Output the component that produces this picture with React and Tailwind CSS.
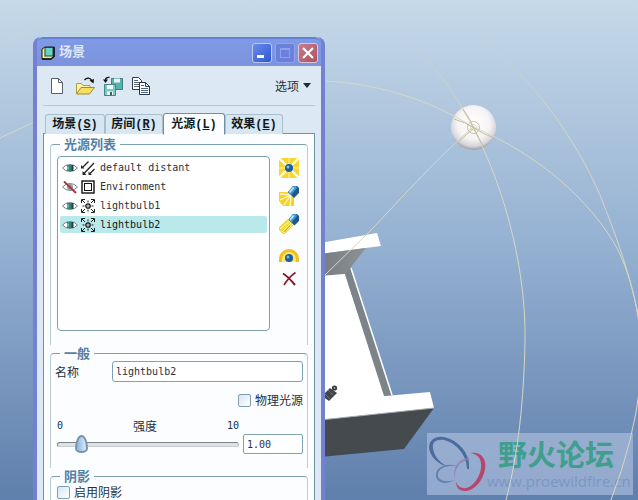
import React from 'react';

function Scene() {
  return (
    <svg
      className="pointer-events-none absolute inset-0 h-full w-full"
      viewBox="0 0 638 500"
      preserveAspectRatio="xMinYMin slice"
      aria-hidden="true"
    >
      <defs>
        <radialGradient id="bulb" cx="0.5" cy="0.4" r="0.6">
          <stop offset="0" stopColor="#ffffff" />
          <stop offset="0.6" stopColor="#f6f3f5" />
          <stop offset="0.85" stopColor="#d9d6dc" />
          <stop offset="1" stopColor="#9d9aa3" />
        </radialGradient>
        <linearGradient id="shade" x1="0" y1="0" x2="1" y2="0">
          <stop offset="0" stopColor="#777c80" />
          <stop offset="1" stopColor="#8d9297" />
        </linearGradient>
        <linearGradient id="fade" gradientUnits="userSpaceOnUse" x1="0" y1="40" x2="0" y2="110">
          <stop offset="0" stopColor="#d0d4be" stopOpacity="0.3" />
          <stop offset="1" stopColor="#d3d5c1" />
        </linearGradient>
      </defs>
      <polygon points="320,243 377,233 381,246 320,254" fill="#fff" />
      <polygon points="320,254 366,248 351,267 345,274 320,276" fill="url(#shade)" />
      <polygon points="320,276 345,274 385,396 430,392 434,408 320,420" fill="#fff" />
      <polygon points="345,274 350,267 392,395 384,396" fill="#7c8489" />
      <path d="M351 268 392 395" stroke="#fff" strokeWidth="1.5" />
      <polygon points="320,420 434,408 404,449 320,457" fill="#444a4e" />
      <path d="M320 420 434 408" stroke="#a9afb3" strokeWidth="1" />
      <path d="M322 396 330 388 337 393 329 401z" fill="#3f4549" />
      <circle cx="334.500" cy="388" r="2.600" fill="#333a3f" />
      <circle cx="334.500" cy="388" r="0.800" fill="#dfe3e6" />
      <path d="M325 394l5 5M328 390l5 5" stroke="#757b80" strokeWidth="0.800" />
      <circle cx="473.500" cy="127.500" r="22.500" fill="url(#bulb)" />
      <g fill="none" stroke="#d6d8c4" strokeWidth="1">
        <path d="M0 138 34 122" />
        <path d="M0 46Q30 28 62 11" opacity="0.3" />
        <path d="M325 81C380 84 430 100 473 127C540 155 592 202 618 250C630 275 636 300 640 330" />
        <path d="M412 43Q445 75 473 127" stroke="url(#fade)" />
        <path d="M473 127C508 195 526 275 525 340C524 400 518 455 506 500" />
        <path d="M485 42C535 82 575 138 600 195C618 240 632 280 640 325" stroke="url(#fade)" />
        <path d="M473 127C430 165 400 200 370 231L325 275" />
        <path d="M640 385Q634 440 611 500" />
      </g>
      <g fill="none" stroke="#c4bfa0" strokeWidth="1">
        <path d="M454 119Q465 122 474 128T494 138M463 109Q470 119 474 128T484 148M458 142 474 128" />
        <circle cx="473.500" cy="127.500" r="6" />
        <circle cx="473.500" cy="127.500" r="3" opacity="0.6" />
      </g>
    </svg>
  );
}

function Watermark() {
  return (
    <div className="absolute right-[5px] bottom-[5px] flex h-[62px] w-[206px] bg-[#b4c5e2]/60">
      <svg className="h-[62px] w-[60px] shrink-0" viewBox="0 0 60 62" aria-hidden="true">
        <path d="M22 34C12 32 3 24 2 15C2 7 8 3 16 4C30 6 44 20 42 36L40 36C40 22 29 10 17 7C9 6 5 9 6 15C7 24 14 31 22 34Z" fill="#4b6d9d" />
        <path d="M43 20C54 18 60 26 58 36C56 48 47 58 38 58C32 58 29 54 29 49C31 54 35 56 39 55C46 54 53 44 54 35C55 26 51 21 43 20Z" fill="#b5476d" />
        <path d="M42 27C34 27 27 35 28 45C25 35 32 25 42 25Z" fill="#8e7fa8" opacity="0.8" />
        <path d="M32 34C23 31 12 34 11 41C10 47 18 50 27 47C18 53 8 49 9 41C10 33 22 29 32 34Z" fill="#6182ad" />
      </svg>
      <div className="relative flex flex-col pt-1 whitespace-nowrap">
        <div className="px-[11px] font-['Noto_Sans_CJK_SC',sans-serif] text-[29px] leading-8 font-bold text-[#3f9f8c]">野火论坛</div>
        <div className="font-['Open_Sans',sans-serif] text-[15px] leading-6 text-[#7c97c0]">www.proewildfire.cn</div>
      </div>
    </div>
  );
}

function AppIcon() {
  return (
    <svg className="h-[14px] w-[14px]" viewBox="0 0 14 14" aria-hidden="true">
      <path d="M1 3 4 1h9v9l-3 3H1z" fill="#f3ec86" stroke="#1b1d20" />
      <rect x="4" y="1.500" width="8" height="8.500" fill="#66d3c8" stroke="#20464a" />
      <path d="M13 1v9.500L10 13H1" fill="none" stroke="#101214" strokeWidth="1.500" />
    </svg>
  );
}

function NewIcon() {
  return (
    <svg className="h-5 w-5" viewBox="0 0 20 20" aria-hidden="true">
      <path d="M4.500 2.500h7l4 4v11h-11z" fill="#fff" stroke="#5a5f66" />
      <path d="M11.500 2.500v4h4" fill="none" stroke="#5a5f66" />
    </svg>
  );
}

function OpenIcon() {
  return (
    <svg className="h-5 w-5" viewBox="0 0 20 20" aria-hidden="true">
      <path d="M1.500 18V7.500h5l1.500 2h7V12" fill="#fbf3a6" stroke="#b29a38" />
      <path d="M1.500 18 6 11.500h13.500L14.500 18z" fill="#f4df62" stroke="#a48c2c" />
      <path d="M9.500 4C12 1 15.500 1.500 17 5" fill="none" stroke="#111" strokeWidth="1.200" />
      <path d="M14.500 4.500 19 3l-.500 4.500z" fill="#111" />
    </svg>
  );
}

function SaveIcon() {
  return (
    <svg className="h-5 w-5" viewBox="0 0 20 20" aria-hidden="true">
      <path d="M8.500 2.500h11v11h-11z" fill="#58b3ae" stroke="#3e7f85" />
      <path d="M11 2.500h6v4h-6z" fill="#e6f4f6" />
      <path d="M1.500 8.500h11v11h-11z" fill="#7ccbc3" stroke="#47818a" />
      <path d="M4 9h6v4H4zM4 15.500h6V19H4z" fill="#f2fafb" />
      <path d="M7 16h2v3H7z" fill="#33626b" />
      <path d="M6.500 1.500Q2.500 1 2.500 4" fill="none" stroke="#111" strokeWidth="1.300" />
      <path d="M0 3.500h5L2.500 7z" fill="#111" />
    </svg>
  );
}

function CopyIcon() {
  return (
    <svg className="h-5 w-5" viewBox="0 0 20 20" aria-hidden="true">
      <path d="M1.500 1.500h6l3 3v9h-9z" fill="#fff" stroke="#303844" />
      <path d="M3 4.500h4M3 6.500h6M3 8.500h6M3 10.500h6" stroke="#596778" />
      <path d="M8.500 6.500h6l4 4v8h-10z" fill="#fff" stroke="#24344c" />
      <path d="M14.500 6.500v4h4" fill="none" stroke="#24344c" />
      <path d="M10 9.500h3M10 12.500h7M10 14.500h7M10 16.500h7" stroke="#4b6585" />
    </svg>
  );
}

function EyeIcon({ off }) {
  return (
    <svg className="h-[14px] w-4" viewBox="0 0 16 14" aria-hidden="true">
      <path d="M.5 7Q3.500 3.500 8 3.500T15.500 7Q12.500 10.500 8 10.500T.5 7Z" fill="#fff" stroke="#77838b" />
      {off ? (
        <>
          <circle cx="8" cy="7" r="3" fill="#8d9b9d" />
          <path d="M2 1.500 14 13" stroke="#a03a3d" strokeWidth="1.800" />
        </>
      ) : (
        <>
          <path d="M5 4h6v6H5z" fill="#2f8577" />
          <path d="M9.500 4h2v6h-2z" fill="#1d4549" />
          <path d="M5 5.500h2v3H5z" fill="#6fb5a5" />
        </>
      )}
    </svg>
  );
}

function KindIcon({ kind }) {
  return (
    <svg className="h-[14px] w-[14px]" viewBox="0 0 14 14" aria-hidden="true">
      {kind === 'distant' && (
        <>
          <path d="M7.500.5 1.500 6.500M13 2 3 12.500M13.500 8 9 12.500" stroke="#222" strokeWidth="1.300" />
          <path d="M0 7.500V4l3.500 3.500zM1.500 14v-4l4 4zM7.500 14v-3.500L11 14z" fill="#222" />
        </>
      )}
      {kind === 'environment' && (
        <>
          <rect x="1" y="1" width="12" height="12" fill="#fff" stroke="#111" strokeWidth="1.400" />
          <rect x="3.500" y="3.500" width="7" height="7" fill="#fff" stroke="#111" />
        </>
      )}
      {kind === 'bulb' && (
        <>
          <path d="M.5 4V.5H4M10 .5h3.500V4M13.500 10v3.500H10M4 13.500H.5V10M1 1l3 3M13 1l-3 3M13 13l-3-3M1 13l3-3M7 1.500v2M7 10.500v2M1.500 7h2M10.500 7h2" fill="none" stroke="#222" />
          <circle cx="7" cy="7" r="2.200" fill="#fff" stroke="#111" strokeWidth="1.300" />
          <circle cx="7" cy="7" r="0.700" fill="#111" />
        </>
      )}
    </svg>
  );
}

function PointLightIcon() {
  return (
    <svg className="h-5 w-5" viewBox="0 0 20 20" aria-hidden="true">
      <rect width="20" height="20" fill="#f8d62c" />
      <path d="M0 0 20 20M20 0 0 20" stroke="#fffbe0" strokeWidth="2.400" />
      <path d="M10 0v20M0 10h20" stroke="#fbe986" strokeWidth="1.500" />
      <circle cx="10" cy="10" r="4" fill="#1b5d9e" />
      <circle cx="9" cy="9" r="1.500" fill="#7cc3ea" />
    </svg>
  );
}

function SpotLightIcon() {
  return (
    <svg className="h-5 w-5" viewBox="0 0 20 20" aria-hidden="true">
      <path d="M0 6h10l5 5v9H4L0 15z" fill="#f6d22b" />
      <path d="M12 9 1 8M12 9 1 14M12 9 5 19M12 9l-1 11" stroke="#fff7c4" strokeWidth="1.300" />
      <path d="M9 6 14 0h4l2 2v5l-5 5z" fill="#22578c" />
      <path d="M9 6 14 0h3l1 2-6 7z" fill="#3c9bd6" />
      <path d="M10 5.500 14 1l1.500 1-4.500 5z" fill="#b9e4f7" />
    </svg>
  );
}

function BeamIcon() {
  return (
    <svg className="h-5 w-5" viewBox="0 0 20 20" aria-hidden="true">
      <path d="M9 5 0 13v3l4 4h2l9-9z" fill="#f0d83c" />
      <path d="M11 7 1 15M12.500 8.500 3 18M14 10l-9 9" stroke="#fff8b8" />
      <path d="M11 11.500 5.500 18" stroke="#b7a02c" />
      <path d="M9.500 5.500 14 0h4l2 2v5l-4.500 4.500z" fill="#22578c" />
      <path d="M9.500 5.500 14 0h3l1 2-5.500 6.500z" fill="#3c9bd6" />
      <path d="M10.500 5 14 1l1.500 1-4 4.500z" fill="#b9e4f7" />
    </svg>
  );
}

function SkyLightIcon() {
  return (
    <svg className="h-5 w-5" viewBox="0 0 20 20" aria-hidden="true">
      <path d="M0 20v-3A10 10 0 0 1 20 17v3z" fill="#f3bd1f" />
      <path d="M3 20v-3a7 7 0 0 1 14 0v3z" fill="#fbe768" />
      <circle cx="10" cy="16" r="4" fill="#1b5d9e" />
      <circle cx="9" cy="15" r="1.500" fill="#6fb9e4" />
    </svg>
  );
}

function DeleteIcon() {
  return (
    <svg className="h-5 w-5" viewBox="0 0 20 20" aria-hidden="true">
      <path d="M4 3.500Q9 6.500 16 15" fill="none" stroke="#7d1424" strokeWidth="2" />
      <path d="M16.500 2.500Q10 7 5 15" fill="none" stroke="#8d1a2b" strokeWidth="1.600" />
    </svg>
  );
}

const tools = [
  ['新建', NewIcon],
  ['打开', OpenIcon],
  ['保存', SaveIcon],
  ['复制', CopyIcon],
];

const tabs = [
  ['场景', 'S', 'w-[60px]'],
  ['房间', 'R', 'w-[58px]'],
  ['光源', 'L', 'w-[62px]'],
  ['效果', 'E', 'w-[58px]'],
];

const lights = [
  { name: 'default distant', kind: 'distant' },
  { name: 'Environment', kind: 'environment', off: true },
  { name: 'lightbulb1', kind: 'bulb' },
  { name: 'lightbulb2', kind: 'bulb', selected: true },
];

const lightButtons = [
  ['添加灯泡', PointLightIcon],
  ['添加聚光灯', SpotLightIcon],
  ['添加远光源', BeamIcon],
  ['添加天空光源', SkyLightIcon],
  ['删除光源', DeleteIcon],
];

function Group({ title, children }) {
  return (
    <fieldset className="min-w-0 rounded-t border border-b-0 border-x-[#b9ccd6] border-t-[#7f9fae] pr-1 pl-1">
      <legend className="ml-[5px] h-4 px-1 text-[13px] leading-4 font-bold text-[#5580a6]">{title}</legend>
      {children}
    </fieldset>
  );
}

function CheckBox({ id, children }) {
  return (
    <div className="flex h-4 items-center gap-1">
      <input
        id={id}
        type="checkbox"
        className="h-[13px] w-[13px] appearance-none rounded-[2px] border border-[#7fa0b4] bg-linear-to-br from-[#d3e6f4] to-white checked:bg-[#5580a6]"
      />
      <label htmlFor={id}>{children}</label>
    </div>
  );
}

function TitleBar() {
  return (
    <header className="flex h-[29px] items-center justify-between rounded-t-md border-t-2 border-[#6680d4] bg-linear-to-b from-[#7f9ae6] to-[#7c93dc] pr-[3px] pl-1">
      <div className="flex items-center gap-1">
        <AppIcon />
        <h1 className="font-['Liberation_Mono','Noto_Sans_CJK_SC',monospace] text-[13px] leading-4 font-bold text-[#dfe7fb]">场景</h1>
      </div>
      <div className="flex gap-[3px]">
        <button aria-label="最小化" className="flex h-5 w-5 items-end rounded-[3px] border border-[#b9c8f4] bg-linear-to-br from-[#6b8cec] to-[#2f55d4] p-1">
          <span className="h-[3px] w-[7px] bg-white" />
        </button>
        <button aria-label="最大化" className="flex h-5 w-5 items-center justify-center rounded-[3px] border border-[#8fa3ea] bg-[#6a80da]">
          <span className="h-[10px] w-[10px] border border-t-2 border-[#8f9fec]" />
        </button>
        <button aria-label="关闭" className="flex h-5 w-5 items-center justify-center rounded-[3px] border border-[#dcc6dc] bg-linear-to-br from-[#c67c8c] to-[#b0505f]">
          <svg className="h-3 w-3" viewBox="0 0 12 12" aria-hidden="true">
            <path d="M1 1l10 10M11 1 1 11" stroke="#fff" strokeWidth="2.200" />
          </svg>
        </button>
      </div>
    </header>
  );
}

export default function App() {
  return (
    <div className="relative h-screen overflow-hidden bg-linear-to-b from-[#c6d9e9] via-[#94b0d1] to-[#5f7fac] font-['Noto_Sans_CJK_SC',sans-serif] text-[12px] leading-4 text-[#26313c]">
      <Watermark />
      <Scene />
      <main className="relative mt-[37px] ml-[33px] w-[292px] rounded-t-lg border-x-4 border-[#7480d2] bg-[#dce8f3]">
        <TitleBar />
        <div className="px-1.5">
          <div className="flex h-10 items-center justify-between border-b border-[#b9c8d4] pr-1 pl-1">
            <div className="flex gap-2">
              {tools.map(([label, Icon]) => (
                <button key={label} aria-label={label}>
                  <Icon />
                </button>
              ))}
            </div>
            <button className="flex items-center gap-1">
              选项
              <svg className="h-[5px] w-2" viewBox="0 0 8 5" aria-hidden="true">
                <path d="M0 0h8L4 5z" fill="#1f2a36" />
              </svg>
            </button>
          </div>

          <div role="tablist" className="relative flex h-7 items-end pl-0.5">
            {tabs.map(([label, key, width]) => (
              <button
                key={key}
                role="tab"
                aria-selected={key === 'L'}
                className={`${width} rounded-t-[3px] border font-bold whitespace-nowrap text-[#101820] ${
                  key === 'L'
                    ? '-mb-px h-[22px] border-[#6f93a3] border-b-[#fbfdfe] bg-[#fbfdfe]'
                    : 'h-5 border-[#a9c0cc] border-b-transparent bg-[#d6e6f2]'
                }`}
              >
                {label}
                <span className="font-['Liberation_Mono',monospace]">
                  (<u>{key}</u>)
                </span>
              </button>
            ))}
          </div>

          <section className="-mt-px min-h-screen border border-[#6f93a3] bg-[#fbfdfe] px-1.5 pt-0.5">
            <Group title="光源列表">
              <div className="mb-3.5 flex pt-1 pl-0.5">
                <ul role="listbox" aria-label="光源列表" className="h-[175px] flex-1 rounded border border-[#7f9fae] bg-white p-0.5 font-['DejaVu_Sans_Mono',monospace] text-[10px]">
                  {lights.map((light) => (
                    <li
                      key={light.name}
                      role="option"
                      aria-selected={!!light.selected}
                      className={`mb-0.5 flex h-[17px] items-center rounded-[2px] px-0.5 ${light.selected ? 'bg-[#b9e9ea] text-[#101820]' : ''}`}
                    >
                      <EyeIcon off={light.off} />
                      <span className="mr-[5px] ml-[3px]">
                        <KindIcon kind={light.kind} />
                      </span>
                      {light.name}
                    </li>
                  ))}
                </ul>
                <div className="flex w-[33px] flex-col items-end gap-2 pt-0.5 pr-1">
                  {lightButtons.map(([label, Icon]) => (
                    <button key={label} aria-label={label}>
                      <Icon />
                    </button>
                  ))}
                </div>
              </div>
            </Group>

            <Group title="一般">
              <div className="flex h-[21px] items-center">
                <label htmlFor="light-name" className="w-[57px]">名称</label>
                <input
                  id="light-name"
                  defaultValue="lightbulb2"
                  className="h-[21px] min-w-0 flex-1 rounded-[3px] border border-[#7fa3b0] bg-white px-[3px] font-['DejaVu_Sans_Mono',monospace] text-[10px]"
                />
              </div>
              <div className="mt-2.5 flex justify-end">
                <CheckBox id="physical">物理光源</CheckBox>
              </div>
              <div className="mt-2.5 mb-3.5 flex items-end pl-0.5">
                <div className="min-w-0 flex-1">
                  <div className="flex h-4 justify-between pr-1 font-['DejaVu_Sans_Mono',monospace] text-[10px]">
                    <span>0</span>
                    <label htmlFor="strength" className="font-['Noto_Sans_CJK_SC',sans-serif] text-[12px]">强度</label>
                    <span>10</span>
                  </div>
                  <div className="flex h-5 items-center pr-1">
                    <input
                      id="strength"
                      type="range"
                      min="0"
                      max="10"
                      defaultValue="1"
                      className="h-[5px] w-full appearance-none rounded-full border border-t-[#7c8287] border-r-[#b5bcc2] border-b-[#c5ccd1] border-l-[#7c8287] bg-[#dfe3e6] [&::-webkit-slider-thumb]:h-[18px] [&::-webkit-slider-thumb]:w-[13px] [&::-webkit-slider-thumb]:appearance-none [&::-webkit-slider-thumb]:rounded-[50%_50%_50%_50%/75%_75%_25%_25%] [&::-webkit-slider-thumb]:border-2 [&::-webkit-slider-thumb]:border-[#7593b0] [&::-webkit-slider-thumb]:bg-linear-to-r [&::-webkit-slider-thumb]:from-[#8fb8dc] [&::-webkit-slider-thumb]:to-[#d8ebfa]"
                    />
                  </div>
                </div>
                <input
                  aria-label="强度值"
                  defaultValue="1.00"
                  className="h-5 w-[60px] rounded-[2px] border border-[#7fa3b0] bg-white px-[3px] font-['DejaVu_Sans_Mono',monospace] text-[10px]"
                />
              </div>
            </Group>

            <Group title="阴影">
              <div className="pl-0.5">
                <CheckBox id="shadow">启用阴影</CheckBox>
              </div>
            </Group>
          </section>
        </div>
      </main>
    </div>
  );
}
